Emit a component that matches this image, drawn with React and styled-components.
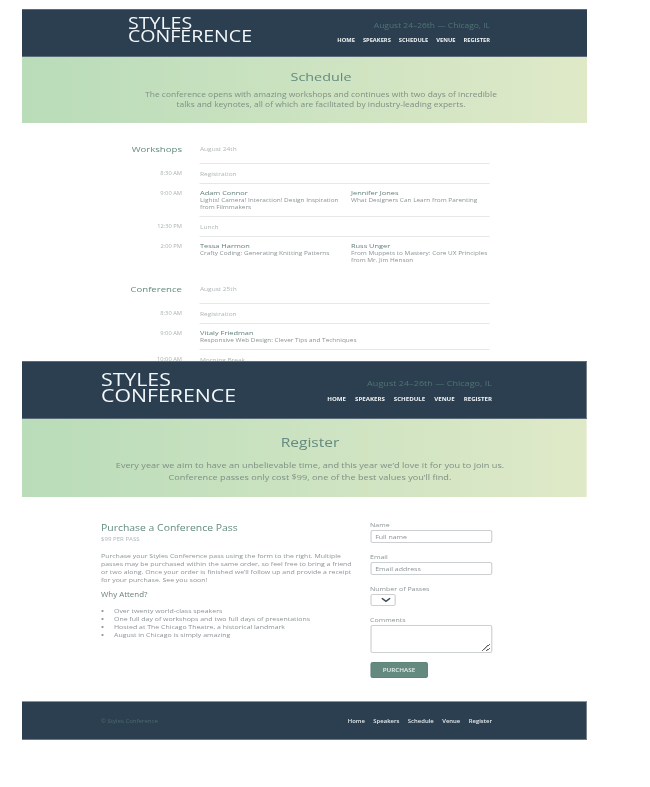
import React from "react";
import styled, { createGlobalStyle } from "styled-components";

const GlobalStyle = createGlobalStyle`
  html, body {
    margin: 0;
    padding: 0;
    background: #fff;
    font-family: "Open Sans", "Liberation Sans", sans-serif;
  }
`;

// the screenshot is squashed vertically, each page by its own amount
const TOP_X = 1.25;
const BIG_X = 1.15;

const NAV = ["Home", "Speakers", "Schedule", "Venue", "Register"];

const workshops = [
  { time: "8:30 AM", note: "Registration", h: 20 },
  {
    time: "9:00 AM",
    h: 33,
    talks: [
      { who: "Adam Connor", what: "Lights! Camera! Interaction! Design Inspiration from Filmmakers" },
      { who: "Jennifer Jones", what: "What Designers Can Learn from Parenting" },
    ],
  },
  { time: "12:30 PM", note: "Lunch", h: 20 },
  {
    time: "2:00 PM",
    h: 41,
    open: true,
    talks: [
      { who: "Tessa Harmon", what: "Crafty Coding: Generating Knitting Patterns" },
      { who: "Russ Unger", what: "From Muppets to Mastery: Core UX Principles from Mr. Jim Henson" },
    ],
  },
];

const conference = [
  { time: "8:30 AM", note: "Registration", h: 20 },
  {
    time: "9:00 AM",
    h: 26,
    talks: [{ who: "Vitaly Friedman", what: "Responsive Web Design: Clever Tips and Techniques", wide: true }],
  },
  { time: "10:00 AM", note: "Morning Break", h: 20 },
];

const Header = ({ big }) => (
  <HeaderBar $big={big}>
    <Logo $big={big}>
      STYLES
      <br />
      CONFERENCE
    </Logo>
    <HeaderRight>
      <Tagline $big={big}>August 24–26th — Chicago, IL</Tagline>
      <TopNav $big={big}>
        {NAV.map((n) => (
          <span key={n}>{n}</span>
        ))}
      </TopNav>
    </HeaderRight>
  </HeaderBar>
);

const ScheduleDay = ({ title, date, rows }) => (
  <div>
    <Row $h={26} $first>
      <DayName>{title}</DayName>
      <Cell>
        <Note>{date}</Note>
      </Cell>
    </Row>
    {rows.map((r, i) => (
      <Row key={i} $h={r.h} $open={r.open}>
        <Time>{r.time}</Time>
        <Cell>
          {r.note && <Note>{r.note}</Note>}
          {r.talks &&
            r.talks.map((t) => (
              <Talk key={t.who} $wide={t.wide}>
                <Who>{t.who}</Who>
                <What>{t.what}</What>
              </Talk>
            ))}
        </Cell>
      </Row>
    ))}
  </div>
);

export default function App() {
  return (
    <Page>
      <GlobalStyle />
      <SchedulePage>
        <Header />
        <Hero>
          <HeroTitle>Schedule</HeroTitle>
          <HeroText>
            The conference opens with amazing workshops and continues with two days of incredible
            <br />
            talks and keynotes, all of which are facilitated by industry-leading experts.
          </HeroText>
        </Hero>
        <ScheduleBody>
          <ScheduleDay title="Workshops" date="August 24th" rows={workshops} />
          <ScheduleDay title="Conference" date="August 25th" rows={conference} />
        </ScheduleBody>
      </SchedulePage>

      <RegisterPage>
        <Header big />
        <Hero $big>
          <HeroTitle $big>Register</HeroTitle>
          <HeroText $big>
            Every year we aim to have an unbelievable time, and this year we’d love it for you to join us.
            <br />
            Conference passes only cost $99, one of the best values you’ll find.
          </HeroText>
        </Hero>

        <RegisterBody>
          <Info>
            <InfoTitle>Purchase a Conference Pass</InfoTitle>
            <Price>$99 PER PASS</Price>
            <InfoText>
              Purchase your Styles Conference pass using the form to the right. Multiple passes may be
              purchased within the same order, so feel free to bring a friend or two along. Once your
              order is finished we’ll follow up and provide a receipt for your purchase. See you soon!
            </InfoText>
            <WhyTitle>Why Attend?</WhyTitle>
            <Bullets>
              <li>Over twenty world-class speakers</li>
              <li>One full day of workshops and two full days of presentations</li>
              <li>Hosted at The Chicago Theatre, a historical landmark</li>
              <li>August in Chicago is simply amazing</li>
            </Bullets>
          </Info>
          <Form>
            <Field>
              <FieldLabel>Name</FieldLabel>
              <TextInput placeholder="Full name" />
            </Field>
            <Field>
              <FieldLabel>Email</FieldLabel>
              <TextInput placeholder="Email address" />
            </Field>
            <Field>
              <FieldLabel>Number of Passes</FieldLabel>
              <SelectBox>
                <svg width="9" height="6" viewBox="0 0 10 6" fill="none">
                  <path d="M1 1l4 3.4L9 1" stroke="#3d4a52" strokeWidth="1.5" />
                </svg>
              </SelectBox>
            </Field>
            <Field>
              <FieldLabel>Comments</FieldLabel>
              <CommentBox />
            </Field>
            <Purchase type="button">PURCHASE</Purchase>
          </Form>
        </RegisterBody>

        <Footer>
          <Copy>© Styles Conference</Copy>
          <FootNav>
            {NAV.map((n) => (
              <span key={n}>{n}</span>
            ))}
          </FootNav>
        </Footer>
      </RegisterPage>
    </Page>
  );
}

const Page = styled.div`
  width: 565px;
  margin: 9px 0 0 22px;
  filter: blur(0.4px);
`;

const SchedulePage = styled.div`
  width: ${565 / TOP_X}px;
  height: 352px;
  overflow: hidden;
  transform: scaleX(${TOP_X});
  transform-origin: left top;
`;

const RegisterPage = styled.div`
  width: ${565 / BIG_X}px;
  transform: scaleX(${BIG_X});
  transform-origin: left top;
`;

const HeaderBar = styled.header`
  box-sizing: border-box;
  height: ${(p) => (p.$big ? "58px" : "48px")};
  padding: ${(p) =>
    p.$big
      ? `9px ${95 / BIG_X}px 0 ${79 / BIG_X}px`
      : `7px ${97 / TOP_X}px 0 ${106 / TOP_X}px`};
  background: #2b3f50;
  border-top: 1px solid #5b6b78;
  border-bottom: 1px solid #5b6b78;
  display: flex;
  justify-content: space-between;
`;

const Logo = styled.div`
  color: #f4f8fa;
  font-size: ${(p) => (p.$big ? "18.5px" : "15.65px")};
  line-height: ${(p) => (p.$big ? "16px" : "13px")};
`;

const HeaderRight = styled.div`
  display: flex;
  flex-direction: column;
  align-items: flex-end;
`;

const Tagline = styled.div`
  color: #4f7572;
  font-size: ${(p) => (p.$big ? "7.9px" : "6.75px")};
  line-height: 12px;
  margin-top: ${(p) => (p.$big ? "6px" : "3px")};
`;

const TopNav = styled.nav`
  display: flex;
  gap: ${(p) => (p.$big ? "7.8px" : "6.4px")};
  margin-top: ${(p) => (p.$big ? "6px" : "4px")};
  color: #f0f4f6;
  font-size: ${(p) => (p.$big ? "5.33px" : "4.6px")};
  line-height: 8px;
  font-weight: 700;
  text-transform: uppercase;
`;

const Hero = styled.section`
  box-sizing: border-box;
  height: ${(p) => (p.$big ? "78px" : "66px")};
  padding: ${(p) => (p.$big ? `13px 0 0 ${11 / BIG_X}px` : `10px 0 0 ${33 / TOP_X}px`)};
  background: linear-gradient(90deg, #b9dcb9 0%, #dfe9c8 100%);
  text-align: center;
`;

const HeroTitle = styled.h1`
  margin: 0;
  font-weight: 400;
  color: #648a80;
  font-size: ${(p) => (p.$big ? "13.5px" : "11.5px")};
  line-height: 20px;
`;

const HeroText = styled.p`
  margin: ${(p) => (p.$big ? "7px" : "3px")} 0 0;
  color: #7f9085;
  font-size: ${(p) => (p.$big ? "7.96px" : "6.75px")};
  line-height: ${(p) => (p.$big ? "11.5px" : "10px")};
`;

const ScheduleBody = styled.div`
  padding: 15px ${97 / TOP_X}px 0 ${106 / TOP_X}px;
`;

const Row = styled.div`
  box-sizing: border-box;
  height: ${(p) => p.$h}px;
  display: grid;
  grid-template-columns: ${54 / TOP_X}px ${290 / TOP_X}px;
  column-gap: ${18 / TOP_X}px;
  align-items: start;
  padding-top: ${(p) => (p.$first ? "4px" : "5px")};
  & > div:last-child {
    box-sizing: border-box;
    height: ${(p) => p.$h}px;
    margin-top: ${(p) => (p.$first ? "-4px" : "-5px")};
    padding-top: ${(p) => (p.$first ? "6px" : "5px")};
    border-bottom: ${(p) => (p.$open ? "none" : "1px solid #e6e8e8")};
  }
`;

const DayName = styled.div`
  color: #648a80;
  font-size: 7.7px;
  line-height: 14px;
  white-space: nowrap;
  justify-self: end;
`;

const Time = styled.div`
  color: #a9b2b4;
  font-size: 4.6px;
  line-height: 9px;
  text-align: right;
`;

const Cell = styled.div`
  display: flex;
  gap: ${11 / TOP_X}px;
`;

const Note = styled.div`
  color: #aeb6b8;
  font-size: 5.24px;
  line-height: 10px;
`;

const Talk = styled.div`
  flex: ${(p) => (p.$wide ? "1" : `0 0 ${140 / TOP_X}px`)};
`;

const Who = styled.div`
  color: #5f7d78;
  font-size: 5.95px;
  line-height: 8px;
`;

const What = styled.div`
  color: #8b9496;
  font-size: 5.17px;
  line-height: 7px;
`;

const RegisterBody = styled.div`
  box-sizing: border-box;
  height: 204px;
  padding: 24px ${95 / BIG_X}px 0 ${79 / BIG_X}px;
  display: flex;
  justify-content: space-between;
`;

const Info = styled.div`
  width: ${254 / BIG_X}px;
`;

const InfoTitle = styled.h2`
  margin: 0;
  font-weight: 400;
  color: #648a80;
  font-size: 9.07px;
  line-height: 14px;
`;

const Price = styled.div`
  color: #aeb6b8;
  font-size: 5.3px;
  line-height: 8px;
`;

const InfoText = styled.p`
  margin: 9px 0 0;
  color: #8b9496;
  font-size: 6.05px;
  line-height: 8px;
`;

const WhyTitle = styled.h3`
  margin: 5px 0 0;
  font-weight: 400;
  color: #6b7f7c;
  font-size: 6.9px;
  line-height: 12px;
`;

const Bullets = styled.ul`
  margin: 6px 0 0;
  padding: 0 0 0 ${13 / BIG_X}px;
  color: #8b9496;
  font-size: 6.06px;
  line-height: 8px;
`;

const Form = styled.form`
  width: ${122 / BIG_X}px;
  display: flex;
  flex-direction: column;
`;

const Field = styled.label`
  display: block;
  margin-bottom: 10px;
`;

const FieldLabel = styled.div`
  color: #8b9496;
  font-size: 6.1px;
  line-height: 7px;
  margin-bottom: 2px;
`;

const TextInput = styled.input`
  display: block;
  box-sizing: border-box;
  width: ${122 / BIG_X}px;
  height: 13px;
  padding: 0 ${4 / BIG_X}px;
  border: 1px solid #ccd0d1;
  border-radius: 2px;
  background: #fff;
  font-family: inherit;
  font-size: 6.1px;
  outline: none;
  &::placeholder {
    color: #8b9496;
    opacity: 1;
  }
`;

const SelectBox = styled.div`
  box-sizing: border-box;
  width: ${26 / BIG_X}px;
  height: 12px;
  border: 1px solid #ccd0d1;
  border-radius: 2px;
  display: flex;
  align-items: center;
  justify-content: flex-end;
  padding-right: 3px;
`;

const CommentBox = styled.textarea`
  display: block;
  box-sizing: border-box;
  width: ${122 / BIG_X}px;
  height: 28px;
  margin: 0;
  border: 1px solid #ccd0d1;
  border-radius: 2px;
  outline: none;
`;

const Purchase = styled.button`
  width: ${58 / BIG_X}px;
  height: 16px;
  margin-top: -1px;
  padding: 0;
  border: 1px solid #5e8379;
  border-radius: 2px;
  background: #648a80;
  color: #e8f0ee;
  font-family: inherit;
  font-size: 5.5px;
  font-weight: 600;
`;

const Footer = styled.footer`
  box-sizing: border-box;
  height: 39px;
  padding: 0 ${95 / BIG_X}px 0 ${79 / BIG_X}px;
  background: #2b3f50;
  border-top: 1px solid #8a96a0;
  border-bottom: 1px solid #6b7a88;
  display: flex;
  align-items: center;
  justify-content: space-between;
`;

const Copy = styled.div`
  color: #4f6a6c;
  font-size: 5.26px;
`;

const FootNav = styled.nav`
  display: flex;
  gap: ${8.5 / BIG_X}px;
  color: #e6ecef;
  font-size: 5.15px;
  font-weight: 600;
`;
